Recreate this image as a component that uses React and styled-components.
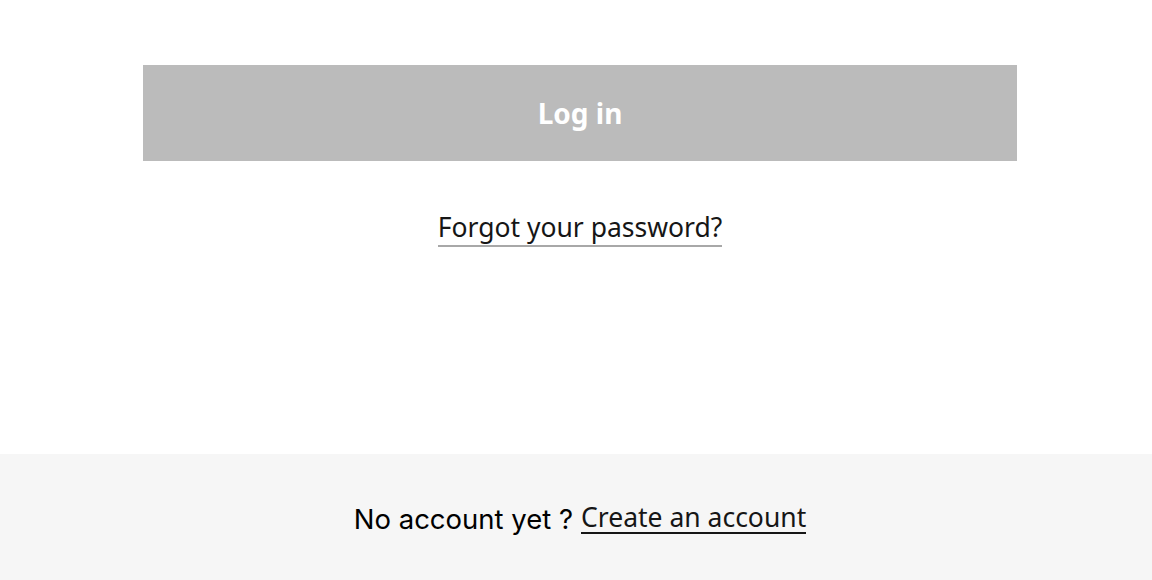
import React from 'react'
import styled, { createGlobalStyle } from 'styled-components'

const GlobalStyle = createGlobalStyle`
  html, body {
    margin: 0;
    padding: 0;
    background: #fff;
  }
  body {
    font-family: 'Noto Sans', 'Open Sans', sans-serif;
    color: #161616;
  }
`

const Page = styled.div`
  display: flex;
  flex-direction: column;
  min-height: 580px;
`

const Main = styled.main`
  height: 454px;
  box-sizing: border-box;
  padding: 65px 0 0 8px;
  display: flex;
  flex-direction: column;
  align-items: center;
`

const SubmitButton = styled.button`
  width: 874px;
  height: 96px;
  border: none;
  background-color: #bbbbbb;
  color: #fff;
  font-family: inherit;
  font-size: 28px;
  font-weight: 700;
  cursor: not-allowed;
`

const TextLink = styled.a`
  color: #161616;
  font-family: 'Noto Sans', 'Open Sans', sans-serif;
  font-size: 26.5px;
  text-decoration: none;
  border-bottom: 2px solid ${p => (p.strong ? '#161616' : '#a8a8a8')};
  line-height: 1.05;
  cursor: pointer;
`

const Forgot = styled.div`
  margin-top: 53px;
`

const Footer = styled.footer`
  flex: 1;
  background-color: #f6f6f6;
  display: flex;
  align-items: center;
  justify-content: center;
  padding: 4px 0 0 8px;
  font-family: Inter, 'Liberation Sans', sans-serif;
  font-size: 27.5px;
  color: #000;
`

const Prompt = styled.span`
  margin-right: 8px;
`

export default function App() {
  return (
    <Page>
      <GlobalStyle />
      <Main>
        <SubmitButton disabled>Log in</SubmitButton>
        <Forgot>
          <TextLink>Forgot your password?</TextLink>
        </Forgot>
      </Main>
      <Footer>
        <Prompt>No account yet ?</Prompt>
        <TextLink strong>Create an account</TextLink>
      </Footer>
    </Page>
  )
}
